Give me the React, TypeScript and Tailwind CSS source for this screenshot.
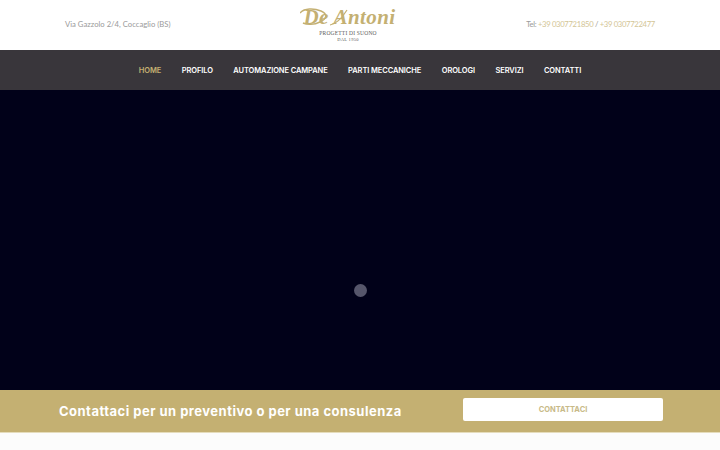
const sans = "font-['Inter','Liberation_Sans',sans-serif]";

const links = [
  { label: "HOME", active: true },
  { label: "PROFILO" },
  { label: "AUTOMAZIONE CAMPANE" },
  { label: "PARTI MECCANICHE" },
  { label: "OROLOGI" },
  { label: "SERVIZI" },
  { label: "CONTATTI" },
];

function Logo() {
  return (
    <div className="flex w-[96px] flex-col items-center">
      <div className="relative h-[18px] w-[96px] pl-[3px] text-center font-['Liberation_Serif',serif] text-[21px] leading-[18px] font-bold tracking-[0.4px] whitespace-nowrap text-[#c4b072] italic">
        De Antoni
        <svg className="absolute top-0 left-0" width="96" height="18" viewBox="0 0 96 18" fill="none">
          <path d="M0 5 C4 0 14 0 21 3 C28 6 27 11 20 14 C14 17 7 17 3 15" stroke="#c4b072" strokeWidth="1.4" />
          <path d="M30 17 C36 16 42 10 47 2" stroke="#c4b072" strokeWidth="1.2" />
        </svg>
      </div>
      <div className="mt-[4px] font-['Liberation_Serif',serif] text-[5.5px] leading-[6px] tracking-[0.2px] whitespace-nowrap text-[#5a5a5a]">
        PROGETTI DI SUONO
      </div>
      <div className="mt-[1px] font-['Liberation_Serif',serif] text-[4.5px] leading-[6px] tracking-[0.3px] whitespace-nowrap text-[#5a5a5a]">
        DAL 1950
      </div>
    </div>
  );
}

export default function App() {
  return (
    <div className={`flex h-[450px] w-[720px] flex-col overflow-hidden bg-[#fcfcfc] ${sans}`}>
      <header className="grid h-[50px] grid-cols-[1fr_auto_1fr] items-center bg-white px-[65px]">
        <div className="font-['Lato',sans-serif] text-[7.7px] whitespace-nowrap text-[#9a9a9a]">Via Gazzolo 2/4, Coccaglio (BS)</div>
        <div className="-translate-x-[12px]">
          <Logo />
        </div>
        <div className="text-right font-['Lato',sans-serif] text-[7.7px] tracking-[-0.33px] whitespace-nowrap text-[#9a9a9a]">
          Tel: <span className="text-[#d3c595]">+39 0307721850</span> / <span className="text-[#d3c595]">+39 0307722477</span>
        </div>
      </header>
      <nav className="flex h-[40px] items-center justify-center gap-[20.5px] bg-[#39363b] pt-[1px]">
        {links.map((l) => (
          <span
            key={l.label}
            className={`text-[7.5px] leading-none font-semibold tracking-[-0.1px] whitespace-nowrap ${l.active ? "text-[#c4b072]" : "text-white"}`}
          >
            {l.label}
          </span>
        ))}
      </nav>
      <main className="flex h-[300px] items-center justify-center bg-[#010119] pt-[100px]">
        <div className="h-[13px] w-[13px] rounded-full bg-[#56566b]" />
      </main>
      <section className="flex h-[43px] items-center justify-between border-b border-[#e5dcbc] bg-[#c4b072] pr-[57px] pl-[59px]">
        <div className="mt-[2px] text-[13px] font-bold tracking-[0.48px] whitespace-nowrap text-white">Contattaci per un preventivo o per una consulenza</div>
        <button className="mb-[3px] flex h-[23px] w-[200px] items-center justify-center rounded-[2px] bg-white text-[7.5px] font-bold text-[#c8ba88]">CONTATTACI</button>
      </section>
    </div>
  );
}
